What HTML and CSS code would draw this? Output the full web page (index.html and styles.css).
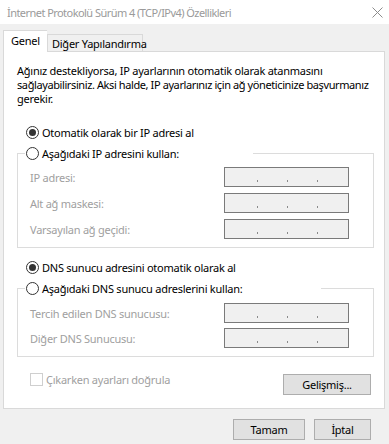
FILE: index.html
```html
<!DOCTYPE html>
<html lang="tr">
<head>
<meta charset="utf-8">
<title>IPv4</title>
<link rel="stylesheet" href="styles.css">
</head>
<body>
<div class="window">
  <div class="titlebar">
    <span class="title">İnternet Protokolü Sürüm 4 (TCP/IPv4) Özellikleri</span>
    <svg class="close" width="11" height="11" viewBox="0 0 11 11"><path d="M0.5 0.5 L10.5 10.5 M10.5 0.5 L0.5 10.5" stroke="#8c8c8c" stroke-width="1" fill="none"/></svg>
  </div>
  <div class="body">
    <div class="tabs">
      <div class="tab active">Genel</div>
      <div class="tab other">Diğer Yapılandırma</div>
    </div>
    <div class="panel">
      <p class="intro">Ağınız destekliyorsa, IP ayarlarının otomatik olarak atanmasını<br><span class="tight">sağlayabilirsiniz. Aksi halde, IP ayarlarınız için ağ yöneticinize başvurmanız</span><br>gerekir.</p>

      <div class="radio-row first"><span class="radio checked"></span><span>Otomatik olarak bir IP adresi al</span></div>
      <div class="group">
        <div class="legend"><span class="radio"></span><span>Aşağıdaki IP adresini kullan:</span></div>
        <div class="field"><span class="label">IP adresi:</span><span class="ip"><i></i><i></i><i></i></span></div>
        <div class="field"><span class="label">Alt ağ maskesi:</span><span class="ip"><i></i><i></i><i></i></span></div>
        <div class="field"><span class="label">Varsayılan ağ geçidi:</span><span class="ip"><i></i><i></i><i></i></span></div>
      </div>

      <div class="radio-row second"><span class="radio checked"></span><span>DNS sunucu adresini otomatik olarak al</span></div>
      <div class="group dns">
        <div class="legend"><span class="radio"></span><span>Aşağıdaki DNS sunucu adreslerini kullan:</span></div>
        <div class="field"><span class="label">Tercih edilen DNS sunucusu:</span><span class="ip"><i></i><i></i><i></i></span></div>
        <div class="field"><span class="label">Diğer DNS Sunucusu:</span><span class="ip"><i></i><i></i><i></i></span></div>
      </div>

      <div class="bottom-row">
        <div class="check"><span class="box"></span><span>Çıkarken ayarları doğrula</span></div>
        <button class="btn adv">Gelişmiş...</button>
      </div>
    </div>
    <div class="footer">
      <button class="btn ok">Tamam</button>
      <button class="btn cancel">İptal</button>
    </div>
  </div>
</div>
</body>
</html>
```
FILE: styles.css
```css
* { box-sizing: border-box; }
html, body { margin: 0; padding: 0; }
body {
  width: 389px; height: 444px; overflow: hidden;
  font-family: "Noto Sans", Lato, sans-serif;
  font-stretch: condensed;
  font-size: 11px; letter-spacing: -0.25px;
  color: #000; background: #f0f0f0;
}
.window { width: 389px; height: 444px; display: flex; flex-direction: column; }
.titlebar {
  height: 24px; background: #fff; display: flex; align-items: center;
  justify-content: space-between; padding: 0 6px 0 7px;
}
.title { color: #9a9a9a; font-size: 11px; letter-spacing: -0.55px; white-space: nowrap; }
.close { margin-top: 1px; }
.body { flex: 1; padding: 6px 4px 0 3px; display: flex; flex-direction: column; }
.tabs { display: flex; align-items: flex-end; height: 21px; position: relative; z-index: 1; }
.tab {
  height: 17px; border: 1px solid #d9d9d9; border-bottom: none;
  background: #f0f0f0; display: flex; align-items: center;
  white-space: nowrap; flex: none;
}
.tab.active {
  width: 44px; height: 22px; margin-bottom: -1px; background: #fff;
  padding: 0 0 3px 7px; border-right: none;
}
.tab.other { width: 96px; padding-left: 4px; }
.panel {
  background: #fff; border: 1px solid #d9d9d9; height: 358px;
  padding: 12px 11px 0 13px; display: flex; flex-direction: column;
}
.intro { margin: 0; line-height: 14px; white-space: nowrap; }
.tight { letter-spacing: -0.4px; }
.radio {
  width: 13px; height: 13px; border: 1px solid #333; border-radius: 50%;
  background: #fff; display: inline-block; flex: none; position: relative; margin-right: 3px;
}
.radio.checked::after {
  content: ""; position: absolute; left: 2px; top: 2px; width: 7px; height: 7px;
  border-radius: 50%; background: #333;
}
.radio-row { display: flex; align-items: center; padding-left: 9px; height: 16px; white-space: nowrap; }
.radio-row.first { margin-top: 18px; }
.radio-row.second { margin-top: 11px; }
.group {
  margin-top: 13px; border: 1px solid #dcdcdc; height: 95px; position: relative;
  padding: 13px 0 0 12px; width: 357px;
}
.group.dns { height: 69px; padding-top: 14px; }
.group.dns .field { margin-bottom: 5px; }
.legend {
  position: absolute; left: 7px; top: -9px; background: #fff; display: flex;
  align-items: center; padding-left: 1px; height: 16px; width: 228px; white-space: nowrap;
}
.group.dns .legend { width: 296px; }
.field { display: flex; align-items: center; height: 20px; margin-bottom: 6px; }
.label { color: #a0a0a0; width: 194px; flex: none; white-space: nowrap; }
.ip {
  width: 125px; height: 20px; border: 1px solid #7a7a7a; background: #f0f0f0;
  display: flex; padding: 12px 0 0 32px;
}
.ip i { width: 1px; height: 2px; background: #8a8a8a; display: block; margin-right: 29px; }
.bottom-row { display: flex; justify-content: space-between; margin-top: 17px; align-items: flex-start; padding-right: 2px; }
.check { display: flex; align-items: center; color: #a0a0a0; padding-left: 13px; height: 13px; margin-top: -1px; white-space: nowrap; }
.box { width: 13px; height: 13px; border: 1px solid #cfcfcf; background: #fff; margin-right: 3px; display: inline-block; }
.btn {
  font-family: inherit; font-stretch: inherit; font-size: 11px; letter-spacing: -0.25px;
  color: #000; background: #e1e1e1;
  border: 1px solid #adadad; height: 21px; padding: 0; margin: 0;
}
.btn.adv { width: 88px; }
.footer { display: flex; justify-content: flex-end; gap: 9px; padding: 10px 14px 0 0; }
.btn.ok { width: 72px; }
.btn.cancel { width: 57px; }
```
